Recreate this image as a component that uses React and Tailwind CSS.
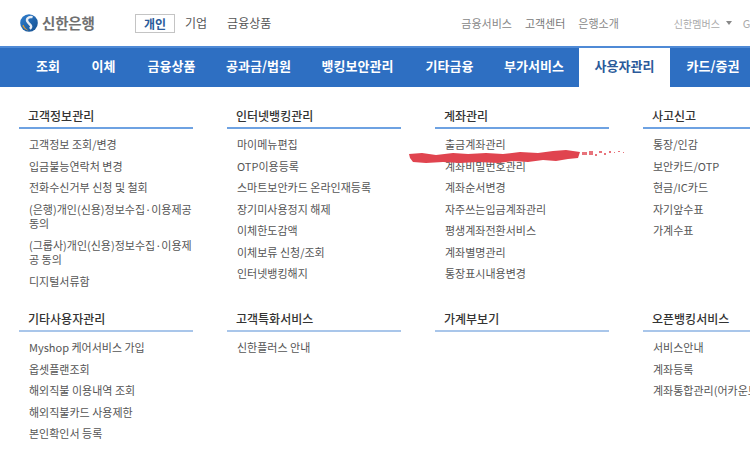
const F = { fontFamily: '"Noto Sans CJK KR", "Noto Sans", sans-serif' };

const nav = [
  ['조회', 'w-[56px] ml-[20px]'],
  ['이체', 'w-[55px]'],
  ['금융상품', 'w-[81px]'],
  ['공과금/법원', 'w-[93px]'],
  ['뱅킹보안관리', 'w-[105px]'],
  ['기타금융', 'w-[79px]'],
  ['부가서비스', 'w-[90px]'],
];

const row1 = [
  ['고객정보관리', ['고객정보 조회/변경', '입금불능연락처 변경', '전화수신거부 신청 및 철회', '(은행)개인(신용)정보수집·이용제공 동의', '(그룹사)개인(신용)정보수집·이용제공 동의', '디지털서류함']],
  ['인터넷뱅킹관리', ['마이메뉴편집', 'OTP이용등록', '스마트보안카드 온라인재등록', '장기미사용정지 해제', '이체한도감액', '이체보류 신청/조회', '인터넷뱅킹해지']],
  ['계좌관리', ['출금계좌관리', '계좌비밀번호관리', '계좌순서변경', '자주쓰는입금계좌관리', '평생계좌전환서비스', '계좌별명관리', '통장표시내용변경']],
  ['사고신고', ['통장/인감', '보안카드/OTP', '현금/IC카드', '자기앞수표', '가계수표']],
];
const row2 = [
  ['기타사용자관리', ['Myshop 케어서비스 가입', '옵셋플랜조회', '해외직불 이용내역 조회', '해외직불카드 사용제한', '본인확인서 등록']],
  ['고객특화서비스', ['신한플러스 안내']],
  ['가계부보기', []],
  ['오픈뱅킹서비스', ['서비스안내', '계좌등록', '계좌통합관리(어카운트)']],
];

function Col({ title, items, line }) {
  return (
    <div className="w-[174px] shrink-0">
      <div className={`h-[26px] pl-[9px] text-[12px] leading-[25px] font-medium text-[#333] border-b-2 ${line}`}>{title}</div>
      <ul className="mt-[8px] flex flex-col gap-[7px] pl-[10px]">
        {items.map((t) => (
          <li key={t} className="text-[11px] leading-[14.5px] text-[#555] break-all">{t}</li>
        ))}
      </ul>
    </div>
  );
}

// Rough brush edge for the red scribble
const top = [[1,6],[14,5],[28,7],[45,5],[60,6],[78,5],[95,6],[112,4],[130,5],[145,3],[158,2],[165,3],[172,4]];
const bot = [[170,10],[160,11],[148,13],[135,12],[120,14],[105,13],[90,15],[70,14],[52,15],[35,14],[18,15],[5,14],[2,10]];
const brush = [...top, ...bot].map(([x, y]) => `${x},${y}`).join(' ');
const specks = [[174,4,5,3],[181,3,4,4],[187,6,2,2],[191,3,3,2],[196,5,2,2],[201,3,2,2],[206,4,1,1],[210,3,2,1],[215,4,1,1]];

export default function App() {
  return (
    <div className="relative w-[750px] h-[451px] overflow-hidden bg-white" style={F}>
      <header className="h-[46px] flex items-center relative whitespace-nowrap">
        <svg width="18" height="20" viewBox="0 0 20 20" className="ml-[20px] shrink-0">
          <defs>
            <linearGradient id="lg" x1="0" y1="0" x2="1" y2="1">
              <stop offset="0" stopColor="#2f7fd0" />
              <stop offset="1" stopColor="#16508f" />
            </linearGradient>
          </defs>
          <circle cx="10" cy="10" r="9.8" fill="url(#lg)" />
          <path d="M14 3.5C9 2.5 6 6 9 9.5s5 4 2 7" fill="none" stroke="#e9eef5" strokeWidth="2.6" />
          <path d="M2.5 13c1.5 3 4 5 7 5.5-3-2-4.5-3.5-5.5-6.5z" fill="#d99a3a" />
        </svg>
        <span className="ml-[4px] w-[53px] shrink-0 text-[14.5px] font-bold text-[#707070] tracking-[-0.2px]">신한은행</span>
        <span className="ml-[40px] h-[19px] w-[40px] shrink-0 border border-[#c4c4c4] text-[12px] leading-[17px] text-center font-bold text-[#2b5a9a]">개인</span>
        <span className="ml-[10px] text-[12px] text-[#555]">기업</span>
        <span className="ml-[20px] text-[12px] text-[#555]">금융상품</span>
        <span className="ml-[190px] text-[11px] text-[#888]">금융서비스</span>
        <span className="ml-[13px] text-[11px] text-[#777]">고객센터</span>
        <span className="ml-[13px] text-[11px] text-[#888]">은행소개</span>
        <span className="ml-[55px] text-[10px] text-[#aaa]">신한멤버스</span>
        <span className="ml-[6px] w-0 h-0 border-x-[3px] border-x-transparent border-t-[4px] border-t-[#888]" />
        <span className="ml-[11px] text-[11px] text-[#aaa]">G</span>
      </header>

      <nav className="h-[41px] bg-[#2e6fc2] border-t-2 border-[#4f8ad6] flex items-stretch whitespace-nowrap text-[13px] font-bold text-white">
        {nav.map(([t, w]) => (
          <div key={t} className={`${w} shrink-0 flex items-center justify-center pb-[3px]`}>{t}</div>
        ))}
        <div className="w-[91px] shrink-0 bg-white text-[#2b5a9a] flex items-center justify-center pb-[3px]">사용자관리</div>
        <div className="w-[86px] shrink-0 flex items-center justify-center pb-[3px]">카드/증권</div>
      </nav>

      <div className="flex gap-[34px] pl-[19px] mt-[16px] h-[202px]">
        {row1.map(([t, i]) => <Col key={t} title={t} items={i} line="border-[#6ea2e2]" />)}
      </div>
      <div className="flex gap-[34px] pl-[19px] mt-[1px]">
        {row2.map(([t, i]) => <Col key={t} title={t} items={i} line="border-[#a9c6ea]" />)}
      </div>

      <svg className="absolute left-[408px] top-[148px]" width="220" height="17" viewBox="0 0 220 17">
        <polygon points={brush} fill="#e0444f" />
        {specks.map(([x, y, w, h]) => <rect key={x} x={x} y={y} width={w} height={h} fill="#e0444f" opacity="0.75" />)}
      </svg>
    </div>
  );
}
